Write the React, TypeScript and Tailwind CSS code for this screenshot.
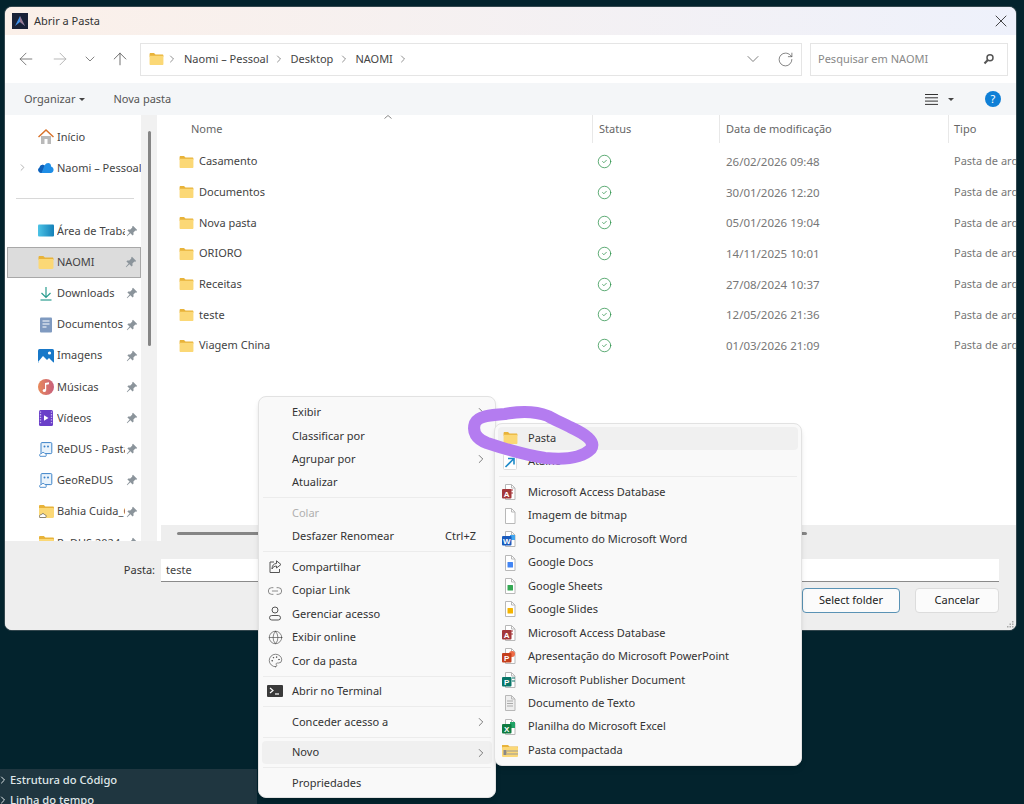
import React from "react";
import { ArrowLeft, ArrowRight, ArrowUp, ChevronDown, ChevronRight, RotateCw, X, Link2, Globe, Palette, CircleCheck } from "lucide-react";

const Folder = ({ w = 15, h = 13 }: { w?: number; h?: number }) => (
  <svg width={w} height={h} viewBox="0 0 15 13" className="shrink-0">
    <path d="M0 1.2C0 .5.5 0 1.2 0h3.6l1.6 1.6h7.4c.7 0 1.2.5 1.2 1.2V4H0z" fill="#e8b33a" />
    <path d="M0 3h13.8c.7 0 1.2.5 1.2 1.2v7.6c0 .7-.5 1.2-1.2 1.2H1.2C.5 13 0 12.5 0 11.8z" fill="#fbd876" />
  </svg>
);

const Pin = () => (
  <svg width="12" height="12" viewBox="0 0 12 12" className="shrink-0">
    <path d="M7 .8l4.2 4.2-1 .8-.8-.3-2 2 .2 2-1 .9-2.2-2.2L1.2 11.2l-.4-.4 2.8-3.2L1.400 5.400l.9-1 2 .2 2-2-.2-.8z" fill="#8b949b" />
  </svg>
);

function Shared() {
  return (
    <svg width="14" height="15" viewBox="0 0 14 15" fill="none">
      <rect x="2" y=".6" width="10.800" height="11" rx="1" fill="#eaf3fb" stroke="#3d83c8" strokeWidth="1" />
      <circle cx="5.500" cy="4.500" r="1" fill="#3d83c8" /><circle cx="9" cy="4.500" r="1" fill="#3d83c8" />
      <path d="M1 14.300c-1-1.500 0-2.800 1.500-2.800.4-1.400 2.800-1.400 3.400 0 1.300 0 1.800 1.600 1 2.800z" fill="#fff" stroke="#3d83c8" strokeWidth=".9" />
    </svg>
  );
}
function CloudFolder() {
  return (
    <svg width="15" height="13" viewBox="0 0 15 13" fill="none">
      <path d="M0 1.200C0 .5.500 0 1.200 0h3.600l1.600 1.600h7.400c.7 0 1.200.5 1.200 1.200V4H0z" fill="#e8b33a" />
      <path d="M0 3h13.800c.7 0 1.200.5 1.200 1.200v7.600c0 .7-.5 1.200-1.200 1.200H1.200C.5 13 0 12.500 0 11.800z" fill="#fbd876" />
      <path d="M.8 12.500c-1-1.500 0-2.800 1.500-2.800.4-1.400 2.800-1.400 3.400 0 1.300 0 1.800 1.600 1 2.800z" fill="#fff" stroke="#555" strokeWidth=".7" />
    </svg>
  );
}

const side: [string, React.ReactNode][] = [
  ["Área de Trabalho", <svg width="16" height="13" viewBox="0 0 16 13"><defs><linearGradient id="dk" x1="0" x2="1"><stop stopColor="#4cc3e6" /><stop offset="1" stopColor="#1480b8" /></linearGradient></defs><rect width="16" height="12" y=".5" rx="1" fill="url(#dk)" /></svg>],
  ["NAOMI", <Folder w={16} h={13} />],
  ["Downloads", <svg width="16" height="15" viewBox="0 0 16 15" fill="none"><path d="M8 1v10M3.500 7L8 11.500 12.500 7" stroke="#2a9d8f" strokeWidth="1.200" /><path d="M2.500 14h11" stroke="#2a9d8f" strokeWidth="1.200" /></svg>],
  ["Documentos", <svg width="16" height="16" viewBox="0 0 16 16"><rect x="2" y="0.500" width="12" height="15" rx="1" fill="#7f9ac0" /><path d="M4.500 4h7M4.500 7h7M4.500 10h4" stroke="#fff" strokeWidth="1.100" /></svg>],
  ["Imagens", <svg width="16" height="14" viewBox="0 0 16 14"><rect width="16" height="14" rx="1.500" fill="#1878c8" /><path d="M0 13l5-6 4 4 2-2 5 5H1z" fill="#fff" /><circle cx="11.500" cy="4" r="1.600" fill="#fff" /></svg>],
  ["Músicas", <svg width="16" height="16" viewBox="0 0 16 16"><defs><linearGradient id="mu" x1="0" x2="1"><stop stopColor="#e8895a" /><stop offset="1" stopColor="#c8607c" /></linearGradient></defs><circle cx="8" cy="8" r="8" fill="url(#mu)" /><path d="M7 11.500V4l4-.8v2L8.200 5.800v5.700z" fill="#fff" /><circle cx="6.300" cy="11.500" r="1.600" fill="#fff" /></svg>],
  ["Vídeos", <svg width="14" height="16" viewBox="0 0 14 16"><rect width="14" height="16" rx="1.500" fill="#6a3fc8" /><path d="M5 5.200v5.600L9.500 8z" fill="#fff" /><path d="M1.500 1.500v13M12.500 1.500v13" stroke="#c6b3ef" strokeWidth="1.300" strokeDasharray="1.300 1.300" /></svg>],
  ["ReDUS - Pasta", <Shared />],
  ["GeoReDUS", <Shared />],
  ["Bahia Cuida_Compart", <CloudFolder />],
  ["ReDUS 2024", <CloudFolder />],
];

const files: [string, string][] = [
  ["Casamento", "26/02/2026 09:48"],
  ["Documentos", "30/01/2026 12:20"],
  ["Nova pasta", "05/01/2026 19:04"],
  ["ORIORO", "14/11/2025 10:01"],
  ["Receitas", "27/08/2024 10:37"],
  ["teste", "12/05/2026 21:36"],
  ["Viagem China", "01/03/2026 21:09"],
];

const Sep = () => <div className="h-px my-[3.1px] mx-1 bg-[#ececec]" />;

const Row = ({ label, icon, right, arrow, muted, active }: { label: string; icon?: React.ReactNode; right?: string; arrow?: boolean; muted?: boolean; active?: boolean }) => (
  <div className={`h-[23.4px] mx-[3px] flex items-center rounded ${active ? "bg-[#f0f0f0]" : ""}`}>
    <div className="w-[30px] flex justify-center pr-[4px] shrink-0">{icon}</div>
    <span className={muted ? "text-[#b0b0b0]" : "text-[#333]"}>{label}</span>
    {right && <span className="ml-auto mr-[16px] text-[#333]">{right}</span>}
    {arrow && <ChevronRight size={14} strokeWidth={1.3} className="ml-auto mr-[4px] text-[#555]" />}
  </div>
);

const ShareIcon = () => (
  <svg width="16" height="16" viewBox="0 0 16 16" fill="none" stroke="#555" strokeWidth="1">
    <path d="M7 3H3v10.500h9.500V10" />
    <path d="M9.500 1.800L14 5.500 9.500 9V7C7.500 7 6 8 5 10c0-3.500 1.800-5.500 4.500-5.500z" />
  </svg>
);
const UserIcon = () => (
  <svg width="14" height="15" viewBox="0 0 14 15" fill="none" stroke="#555" strokeWidth="1">
    <circle cx="7" cy="4" r="3" /><rect x="1.500" y="9.500" width="11" height="4.500" rx="2.250" />
  </svg>
);
const TermIcon = () => (
  <svg width="16" height="12" viewBox="0 0 16 12">
    <rect width="16" height="12" rx="1" fill="#3a3a3a" />
    <path d="M3 3l3 2.500-3 2.500" stroke="#fff" strokeWidth="1.200" fill="none" />
    <path d="M8 9h4" stroke="#fff" strokeWidth="1.200" />
  </svg>
);

const Page = ({ children, fill = "#fff" }: { children?: React.ReactNode; fill?: string }) => (
  <svg width="16" height="16" viewBox="0 0 16 16" fill="none">
    <path d="M3.500.5h6l3.500 3.500v11.500h-9.500z" fill={fill} stroke="#b8b8b8" strokeWidth="1" />
    <path d="M9.500.5v3.500h3.500" stroke="#b8b8b8" strokeWidth="1" />
    {children}
  </svg>
);
const Badge = ({ c, t }: { c: string; t: string }) => (
  <g>
    <rect x="0" y="5" width="9.500" height="9.500" rx="1" fill={c} />
    <text x="4.750" y="12.500" fontSize="8" fontWeight="700" textAnchor="middle" fill="#fff" fontFamily="Liberation Sans">{t}</text>
  </g>
);
const GDoc = ({ c }: { c: string }) => <Page><rect x="5.500" y="7" width="5.500" height="5.500" rx=".5" fill={c} /></Page>;
const Access = ({ c }: { c: string }) => <Page><path d="M11 6h-3M11 9h-3" stroke={c} /><Badge c={c} t="A" /></Page>;

const sub: [string, React.ReactNode][] = [
  ["Microsoft Access Database", <Access c="#a4373a" />],
  ["Imagem de bitmap", <Page />],
  ["Documento do Microsoft Word", <Page><path d="M8 4h5v5H8z" fill="#41a5ee" /><Badge c="#185abd" t="W" /></Page>],
  ["Google Docs", <GDoc c="#4285f4" />],
  ["Google Sheets", <GDoc c="#34a853" />],
  ["Google Slides", <GDoc c="#f4b400" />],
  ["Microsoft Access Database", <Access c="#a4373a" />],
  ["Apresentação do Microsoft PowerPoint", <Page><circle cx="10" cy="6" r="3" fill="#ed6c47" /><Badge c="#c43e1c" t="P" /></Page>],
  ["Microsoft Publisher Document", <Page><path d="M10 6h3M10 9h3" stroke="#077568" /><Badge c="#077568" t="P" /></Page>],
  ["Documento de Texto", <Page fill="#eee"><path d="M5 6h6M5 8.500h6M5 11h6" stroke="#aaa" /></Page>],
  ["Planilha do Microsoft Excel", <Page><path d="M8 3h5v6H8z" fill="#21a366" /><Badge c="#107c41" t="X" /></Page>],
  ["Pasta compactada", <svg width="16" height="13" viewBox="0 0 16 13"><path d="M0 1h6l1.500 1.500H16V4H0z" fill="#e8b33a" /><rect y="3" width="16" height="10" rx="1" fill="#fbd876" /><path d="M5 7h11M5 10h11" stroke="#999" /><rect x="1.500" y="6" width="3" height="5" fill="#888" /></svg>],
];

const Shortcut = () => (
  <svg width="16" height="16" viewBox="0 0 16 16" fill="none">
    <rect x="1.500" y=".5" width="13" height="15" rx="1" fill="#fff" stroke="#ddd" />
    <path d="M3.500 13L12 4.500M6 4.500h6V10.500" stroke="#1f8bc9" strokeWidth="1.600" />
  </svg>
);

const SubRow = ({ t, ic, active }: { t: string; ic: React.ReactNode; active?: boolean }) => (
  <div className={`mx-[3px] h-[23.45px] flex items-center rounded ${active ? "bg-[#f0f0f0]" : ""}`}>
    <div className="w-[30px] flex justify-center pr-[6px] shrink-0">{ic}</div>
    <span className="text-[#333]">{t}</span>
  </div>
);

export default function App() {
  return (
    <div className="relative w-[1024px] h-[804px] overflow-hidden bg-[#03232d] [font-family:'Noto_Sans',sans-serif] text-[11px] text-[#444]">
      {/* Side bar strip of the editor behind */}
      <div className="absolute left-0 bottom-0 w-[257px] h-[35px] bg-[#1f3640] text-[#dfe6e8] font-medium text-[11.2px] leading-[20px] pt-[1px]">
        <div className="flex items-center"><ChevronRight size={12} className="-ml-[3px] mr-[1px]" />Estrutura do Código</div>
        <div className="flex items-center"><ChevronRight size={12} className="-ml-[3px] mr-[1px]" />Linha do tempo</div>
      </div>

      {/* Dialog window */}
      <div className="absolute left-[5px] top-[7px] w-[1011px] h-[623px] rounded-[7px] overflow-hidden bg-white flex flex-col shadow-[0_0_0_1px_#33474e]">
        <div className="h-[28px] shrink-0 flex items-center bg-gradient-to-r from-[#fbf0e9] to-[#eef1fb] pl-[7px] pr-[5px]">
          <svg width="16" height="16" viewBox="0 0 16 16"><rect width="16" height="16" fill="#1a2238" /><path d="M3 13L8 3l5 10-5-4z" fill="#3f8fe8" /><path d="M8 3l5 10-5-4z" fill="#e6694f" opacity=".55" /></svg>
          <span className="ml-[6px] text-[#333]">Abrir a Pasta</span>
          <X size={20} strokeWidth={1} className="ml-auto text-[#222]" />
        </div>

        <div className="h-[48px] shrink-0 flex items-center bg-white">
          <div className="w-[135px] flex items-center text-[#666] pl-[11px]">
            <ArrowLeft size={20} strokeWidth={1} className="shrink-0" />
            <ArrowRight size={20} strokeWidth={1} className="ml-[14px] text-[#aaa] shrink-0" />
            <ChevronDown size={16} strokeWidth={1.1} className="ml-[12px] text-[#555] shrink-0" />
            <ArrowUp size={20} strokeWidth={1} className="ml-[12px] text-[#555] shrink-0" />
          </div>
          <div className="w-[662px] h-[33px] border border-[#e5e5e5] flex items-center pl-[8px] pr-[8px] text-[#444]">
            <Folder w={15} h={12} />
            <ChevronRight size={12} strokeWidth={1.3} className="ml-[2px] text-[#555]" />
            <span className="ml-[6px]">Naomi – Pessoal</span>
            <ChevronRight size={12} strokeWidth={1.3} className="ml-[4px] text-[#555]" />
            <span className="ml-[6px]">Desktop</span>
            <ChevronRight size={12} strokeWidth={1.3} className="ml-[5px] text-[#555]" />
            <span className="ml-[5px]">NAOMI</span>
            <ChevronRight size={12} strokeWidth={1.3} className="ml-[4px] text-[#555]" />
            <ChevronDown size={20} strokeWidth={1} className="ml-auto mr-[14px] text-[#666]" />
            <RotateCw size={17} strokeWidth={1} className="mr-[-1px] text-[#555]" />
          </div>
          <div className="ml-[8px] w-[198px] h-[33px] border border-[#e5e5e5] flex items-center pl-[7px] pr-[12px] text-[#888]">
            <span>Pesquisar em NAOMI</span>
            <svg width="12" height="12" viewBox="0 0 12 12" className="ml-auto" fill="none"><circle cx="7" cy="4.800" r="3" stroke="#555" strokeWidth="1.500" /><path d="M4.800 7L1.500 10.500" stroke="#555" strokeWidth="2" /></svg>
          </div>
        </div>

        <div className="h-[32px] shrink-0 flex items-center bg-[#f4f6f8] pl-[19px] pr-[15px] text-[#555]">
          <span>Organizar</span>
          <span className="ml-[4px] w-0 h-0 border-x-[3px] border-x-transparent border-t-[3px] border-t-[#444]" />
          <span className="ml-[28px]">Nova pasta</span>
          <svg width="13" height="11" viewBox="0 0 13 11" className="ml-auto" fill="none" stroke="#333" strokeWidth="1"><path d="M0 .5h13M0 3.800h13M0 7.100h13M0 10.400h13" /></svg>
          <span className="ml-[10px] w-0 h-0 border-x-[3px] border-x-transparent border-t-[3px] border-t-[#444]" />
          <span className="ml-[31px] w-[16px] h-[16px] rounded-full bg-[#0f7fd6] text-white text-[11px] flex items-center justify-center">?</span>
        </div>

        <div className="flex-1 min-h-0 flex">
          <div className="w-[136px] shrink-0 overflow-hidden pt-[6.4px] bg-white text-[#444]">
            <div className="h-[31px] flex items-center pl-[33px] gap-[3px]">
              <svg width="16" height="15" viewBox="0 0 16 15" className="shrink-0"><path d="M3 7h10v8H3z" fill="#b9b9b9" /><rect x="6.500" y="10" width="3" height="5" fill="#fff" /><path d="M0 7.500L8 0l8 7.500-1 1L8 2 1 8.500z" fill="#d9742c" /></svg>
              <span>Início</span>
            </div>
            <div className="h-[31px] flex items-center pl-[12px]">
              <ChevronRight size={11} strokeWidth={1.2} className="text-[#777] shrink-0" />
              <svg width="16" height="11" viewBox="0 0 16 11" className="ml-[10px] shrink-0"><path d="M3.500 11C.5 11-1 7.500 1.500 5.800 2 3 5 2 6.500 3.500 8.500-.5 13.500.5 13 4.500c3.500.5 3.500 6.500-.5 6.500z" fill="#1f8ee6" /><path d="M3.500 11C.5 11-1 7.500 1.500 5.800 2 3 5 2 6.500 3.500z" fill="#0f5fb8" /></svg>
              <span className="ml-[3px] whitespace-nowrap">Naomi – Pessoal</span>
            </div>
            <div className="h-[32px] flex items-center pl-[11px] pr-[7px]"><div className="h-px w-full bg-[#d8d8d8] mt-[-1px]" /></div>
            {side.map(([name, icon]) => (
              <div key={name} className={`h-[31.2px] flex items-center pr-[2px] ${name === "NAOMI" ? "ml-[2px] pl-[30px] bg-[#dcdcdc] border border-[#a8a8a8]" : "pl-[33px]"}`}>
                <div className="w-[16px] flex justify-center shrink-0">{icon}</div>
                <span className="ml-[3px] w-[68px] overflow-hidden whitespace-nowrap">{name}</span>
                <div className="ml-auto mr-[1px]"><Pin /></div>
              </div>
            ))}
          </div>

          <div className="w-[16px] shrink-0 bg-[#f1f1f1] pt-[16px] flex justify-center">
            <div className="w-[3px] h-[215px] rounded-full bg-[#858585]" />
          </div>

          <div className="flex-1 min-w-0 flex flex-col bg-white overflow-hidden">
            <div className="h-[28px] shrink-0 flex text-[#666] relative">
              <div className="w-[435px] pl-[34px] pt-[6px] shrink-0">Nome</div>
              <div className="w-[127px] border-l border-[#e8e8e8] pl-[6px] pt-[6px] shrink-0">Status</div>
              <div className="w-[229px] border-l border-[#e8e8e8] pl-[6px] pt-[6px] shrink-0">Data de modificação</div>
              <div className="border-l border-[#e8e8e8] pl-[5px] pt-[6px]">Tipo</div>
              <svg width="8" height="4" viewBox="0 0 8 4" className="absolute left-[227px] top-0" fill="none"><path d="M.5 3.500L4 .5l3.500 3" stroke="#888" /></svg>
            </div>
            <div className="flex-1 pt-[3.2px]">
              {files.map(([n, d]) => (
                <div key={n} className="h-[30.7px] flex items-center text-[#555]">
                  <div className="w-[435px] shrink-0 pl-[22px] flex items-center gap-[5px]">
                    <Folder w={15} h={12} />
                    <span className="text-[#444]">{n}</span>
                  </div>
                  <div className="w-[127px] shrink-0 pl-[5px]"><CircleCheck size={15} strokeWidth={1.2} className="text-[#2a9048]" /></div>
                  <div className="w-[229px] shrink-0 pl-[7px] text-[#777] text-[11.5px]">{d}</div>
                  <div className="pl-[6px] text-[#777] whitespace-nowrap">Pasta de arquivos</div>
                </div>
              ))}
            </div>
            <div className="h-[16px] shrink-0 ml-[4px] bg-[#eeeeee] flex items-center pl-[16px]">
              <div className="w-[630px] h-[3px] rounded-full bg-[#858585]" />
            </div>
          </div>
        </div>

        <div className="relative h-[89px] shrink-0 bg-[#eeeeee] pt-[18px] pr-[17px] flex flex-col">
          <div className="flex items-center h-[23px] text-[#333]">
            <span className="w-[150px] text-right">Pasta:</span>
            <div className="ml-[6px] flex-1 h-full bg-white border-b border-[#8a8a8a] pl-[5px] flex items-center text-[#444]">teste</div>
          </div>
          <div className="flex justify-end gap-[15px] mt-[6px]">
            <div className="w-[98px] h-[25px] rounded-[4px] bg-[#fbfbfb] border border-[#5a93b5] flex items-center justify-center text-[#222]">Select folder</div>
            <div className="w-[84px] h-[25px] rounded-[4px] bg-[#fbfbfb] border border-[#dcdcdc] flex items-center justify-center text-[#222]">Cancelar</div>
          </div>
          <svg width="7" height="7" viewBox="0 0 7 7" className="absolute right-[2px] bottom-[2px]" fill="#a8a8a8"><rect x="5" y="0" width="1.500" height="1.500" /><rect x="2.500" y="2.500" width="1.500" height="1.500" /><rect x="5" y="2.500" width="1.500" height="1.500" /><rect x="0" y="5" width="1.500" height="1.500" /><rect x="2.500" y="5" width="1.500" height="1.500" /><rect x="5" y="5" width="1.500" height="1.500" /></svg>
        </div>
      </div>

      {/* Context menu */}
      <div className="absolute left-[258px] top-[396px] w-[238px] h-[402px] pt-[3.8px] rounded-lg bg-[#f9f9f9] border border-[#e2e2e2] shadow-md">
        <Row label="Exibir" arrow />
        <Row label="Classificar por" arrow />
        <Row label="Agrupar por" arrow />
        <Row label="Atualizar" />
        <Sep />
        <Row label="Colar" muted />
        <Row label="Desfazer Renomear" right="Ctrl+Z" />
        <Sep />
        <Row label="Compartilhar" icon={<ShareIcon />} />
        <Row label="Copiar Link" icon={<Link2 size={16} strokeWidth={1} className="text-[#555]" />} />
        <Row label="Gerenciar acesso" icon={<UserIcon />} />
        <Row label="Exibir online" icon={<Globe size={15} strokeWidth={1} className="text-[#444]" />} />
        <Row label="Cor da pasta" icon={<Palette size={15} strokeWidth={1} className="text-[#444]" />} />
        <Sep />
        <Row label="Abrir no Terminal" icon={<TermIcon />} />
        <Sep />
        <Row label="Conceder acesso a" arrow />
        <Sep />
        <Row label="Novo" arrow active />
        <Sep />
        <Row label="Propriedades" />
      </div>

      {/* Submenu */}
      <div className="absolute left-[494px] top-[423px] w-[308px] h-[343px] pt-[2.500px] rounded-lg bg-[#f9f9f9] border border-[#e2e2e2] shadow-md">
        <SubRow t="Pasta" ic={<Folder w={15} h={12} />} active />
        <SubRow t="Atalho" ic={<Shortcut />} />
        <Sep />
        {sub.map(([t, ic], i) => <SubRow key={i} t={t} ic={ic} />)}
      </div>

      {/* Hand-drawn highlight */}
      <svg width="1024" height="804" viewBox="0 0 1024 804" className="absolute inset-0 pointer-events-none" fill="none">
        <path d="M548 416C535 411 520 411 505 414C490 415 478 416 475 423C472 432 476 439 487 443C505 449 525 455 545 458C565 460 582 458 591 449C596 441 585 434 570 427C560 422 555 420 548 416Z" stroke="#b47cf0" strokeWidth="12" strokeLinejoin="round" />
      </svg>
    </div>
  );
}
